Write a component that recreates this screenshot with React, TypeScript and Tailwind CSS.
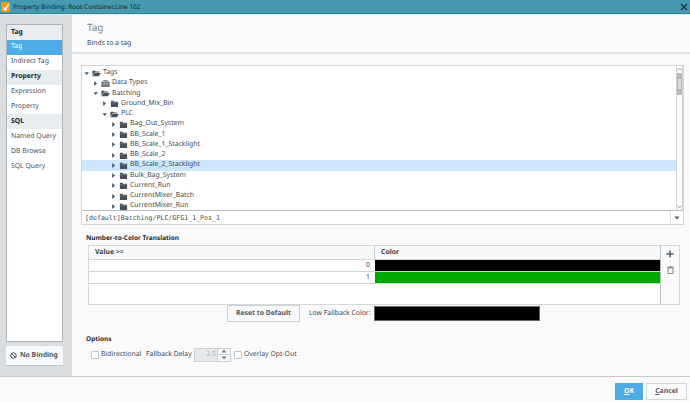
import React from "react";

const Caret = ({ open }: { open: boolean }) =>
  open ? (
    <svg width="7" height="7" viewBox="0 0 7 7" className="shrink-0"><path d="M0.5 2.2h4.4L2.7 5z" fill="#3f5a6b" /></svg>
  ) : (
    <svg width="7" height="7" viewBox="0 0 7 7" className="shrink-0"><path d="M1.2 1v5L4 3.5z" fill="#3f5a6b" /></svg>
  );

const ClosedFolder = () => (
  <svg width="9" height="9" viewBox="0 0 10 9" className="shrink-0"><path d="M1 2.5V1.5h2.8l.8 1h4.4v5.8H1z" fill="#46505a" /><path d="M1 3.6h8" stroke="#8b949c" strokeWidth=".6" /></svg>
);
const OpenFolder = () => (
  <svg width="9" height="9" viewBox="0 0 11 9" className="shrink-0"><path d="M0.5 1h3.2l.8 1h4.3v1.2H3L.5 7.5z" fill="#46505a" /><path d="M3.2 3.8h7.5L8.5 8H.8z" fill="#46505a" /></svg>
);
const TypeFolder = () => (
  <svg width="9" height="9" viewBox="0 0 10 9" className="shrink-0"><path d="M.5 2.5h9v6h-9zM2.5.8h5v1.2h-5z" fill="#5b6670" /><path d="M.5 5h9M3.5 2.5v6M6.5 2.5v6" stroke="#d5d9dc" strokeWidth=".6" /></svg>
);

const tree: { label: string; d: number; open?: boolean; icon?: "type"; sel?: boolean }[] = [
  { label: "Tags", d: 0, open: true },
  { label: "Data Types", d: 1, icon: "type" },
  { label: "Batching", d: 1, open: true },
  { label: "Ground_Mix_Bin", d: 2 },
  { label: "PLC", d: 2, open: true },
  { label: "Bag_Out_System", d: 3 },
  { label: "BB_Scale_1", d: 3 },
  { label: "BB_Scale_1_Stacklight", d: 3 },
  { label: "BB_Scale_2", d: 3 },
  { label: "BB_Scale_2_Stacklight", d: 3, sel: true },
  { label: "Bulk_Bag_System", d: 3 },
  { label: "Current_Run", d: 3 },
  { label: "CurrentMixer_Batch", d: 3 },
  { label: "CurrentMixer_Run", d: 3 },
];

const indent = ["pl-[2px]", "pl-[11px]", "pl-[20px]", "pl-[29px]"];

const side: { t: string; h?: boolean; s?: boolean }[] = [
  { t: "Tag", h: true },
  { t: "Tag", s: true },
  { t: "Indirect Tag" },
  { t: "Property", h: true },
  { t: "Expression" },
  { t: "Property" },
  { t: "SQL", h: true },
  { t: "Named Query" },
  { t: "DB Browse" },
  { t: "SQL Query" },
];

export default function App() {
  return (
    <div className="w-[690px] h-[402px] overflow-hidden flex flex-col bg-[#fafafa] text-[6.85px] leading-none text-[#3c464e] font-['Noto_Sans',sans-serif] [text-rendering:geometricPrecision] whitespace-nowrap">
      <div className="h-[14px] shrink-0 bg-[#4699ae] border-b border-[#3b8397] flex items-center pl-[1px] pr-[1px]">
        <div className="w-[9px] h-[10px] rounded-[1px] bg-[#f39a1f] flex items-center justify-center">
          <svg width="8" height="8" viewBox="0 0 8 8"><path d="M1.5 4.5L3.3 7 6.5 1" stroke="#fff" strokeWidth="1.4" fill="none" /></svg>
        </div>
        <span className="ml-[3px] mt-[1px] text-[#0e2a33] text-[6.5px]">Property Binding: Root Container.Line 102</span>
        <svg width="8" height="8" viewBox="0 0 8 8" className="ml-auto mr-[1px]"><path d="M1 1l6 6M7 1L1 7" stroke="#16313b" strokeWidth="1.2" /></svg>
      </div>
      <div className="h-px shrink-0 bg-[#d5e9ef]" />

      <div className="h-[362px] shrink-0 flex border-b border-[#c4c8cb]">
        <div className="w-[72px] shrink-0 bg-[#d9dde0] pt-[9px] pl-[6px] pr-[9px] flex flex-col">
          <div className="h-[318px] bg-white border border-[#aeb4b9] flex flex-col">
            {side.map((r, i) => (
              <div
                key={i}
                className={
                  "h-[14.9px] flex items-center pl-[4px] pt-[1px] " +
                  (r.h ? "bg-[#e9ecee] font-bold text-[#1c252b]" : r.s ? "bg-[#4dabe6] text-white" : "text-[#47525c]")
                }
              >
                {r.t}
              </div>
            ))}
          </div>
          <div className="mt-[4px] h-[20px] bg-[#f8f9fa] border-b border-[#c2c7ca] flex items-center pl-[4px] gap-[3px] font-bold text-[#4f5962]">
            <svg width="7" height="7" viewBox="0 0 8 8"><circle cx="4" cy="4" r="3.1" fill="none" stroke="#3d4850" strokeWidth="1.1" /><path d="M2 2l4 4" stroke="#3d4850" strokeWidth="1.1" /></svg>
            <span className="pt-[2px]">No Binding</span>
          </div>
        </div>

        <div className="flex-1 flex flex-col min-w-0">
          <div className="h-[39px] shrink-0 border-b-2 border-[#dfe2e5] pl-[15px] flex flex-col bg-[#fafafa]">
            <div className="mt-[7px] text-[10px] text-[#7f8b94]">Tag</div>
            <div className="mt-[9px] text-[#3f4a53]">Binds to a tag</div>
          </div>

          <div className="mt-[11px] ml-[9px] w-[603px] h-[160px] shrink-0 border border-[#d3d6d9] bg-white flex flex-col">
            <div className="h-[145px] shrink-0 flex border-b border-[#b9bec3]">
              <div className="flex-1 pt-[2px] min-w-0">
                {tree.map((n) => (
                  <div key={n.label} className={"h-[10.25px] flex items-center " + indent[n.d] + (n.sel ? " bg-[#cbe6fd]" : "")}>
                    <Caret open={!!n.open} />
                    <span className="ml-[1px] flex shrink-0">
                      {n.icon === "type" ? <TypeFolder /> : n.open ? <OpenFolder /> : <ClosedFolder />}
                    </span>
                    <span className="ml-[2px] pt-[1px] text-[#414c55]">{n.label}</span>
                  </div>
                ))}
              </div>
              <div className="w-[7px] shrink-0 border-l border-[#cfd3d6] border-r flex flex-col items-center bg-[#fdfdfd]">
                <svg width="5" height="7" viewBox="0 0 5 7"><path d="M.5 4.5L2.5 2l2 2.5" stroke="#7d8890" fill="none" strokeWidth=".8" /></svg>
                <div className="w-full h-[22px] bg-[#b6babd] flex justify-center pt-[6px]"><div className="w-[3px] h-[10px] bg-[#d8dbdd]" /></div>
                <svg width="5" height="7" viewBox="0 0 5 7" className="mt-auto"><path d="M.5 2.5L2.5 5l2-2.5" stroke="#7d8890" fill="none" strokeWidth=".8" /></svg>
              </div>
            </div>
            <div className="flex-1 flex items-center">
              <span className="flex-1 pl-[3px] pt-[1px] font-['DejaVu_Sans_Mono',monospace] text-[6.6px] text-[#414c55]">[default]Batching/PLC/GFG1_1_Pos_1</span>
              <div className="w-[13px] h-full border-l border-[#dadde0] flex items-center justify-center">
                <svg width="6" height="4" viewBox="0 0 6 4"><path d="M.5.5h5L3 3.5z" fill="#4b5a66" /></svg>
              </div>
            </div>
          </div>

          <div className="mt-[10px] ml-[14px] text-[6.5px] font-bold text-[#222d35]">Number-to-Color Translation</div>
          <div className="mt-[3.5px] ml-[16px] w-[592px] h-[60px] shrink-0 flex border border-[#d5d8da]">
            <div className="flex-1 bg-white flex flex-col min-w-0">
              <div className="h-[14px] flex bg-[#f7f8f9] font-bold text-[#333e47] border-b border-[#d5d8da]">
                <div className="w-[286px] pl-[6px] pt-[2px] flex items-center border-r border-[#c6cacd]">Value &gt;=</div>
                <div className="flex-1 pl-[6px] pt-[2px] flex items-center">Color</div>
              </div>
              <div className="h-[12px] flex border-b border-[#cfd3d6]">
                <div className="w-[286px] flex items-center justify-end pr-[5px] pt-[2px]">0</div>
                <div className="flex-1 bg-black" />
              </div>
              <div className="h-[12px] flex border-b border-[#cfd3d6]">
                <div className="w-[286px] flex items-center justify-end pr-[5px] pt-[2px]">1</div>
                <div className="flex-1 bg-[#00a800]" />
              </div>
            </div>
            <div className="w-[19px] shrink-0 border-l border-[#bcc1c5] bg-[#fafafa] flex flex-col items-center pt-[4px] gap-[8px]">
              <svg width="8" height="8" viewBox="0 0 8 8"><path d="M4 .5v7M.5 4h7" stroke="#4a5f70" strokeWidth="1.5" /></svg>
              <svg width="7" height="8" viewBox="0 0 7 8"><path d="M1 2h5v5.5H1zM0 1.2h7M2.5.4h2" stroke="#66727b" strokeWidth=".8" fill="none" /></svg>
            </div>
          </div>

          <div className="ml-[155px] flex items-center h-[17px] shrink-0">
            <div className="w-[73px] h-[17px] border border-[#cdd1d4] bg-[#f9fafb] flex items-center justify-center pt-[2px] font-bold text-[#4f5962]">Reset to Default</div>
            <span className="ml-[9px] w-[65px] pt-[2px] text-[#3f4a53]">Low Fallback Color:</span>
            <div className="w-[166px] h-[15px] bg-black border border-[#666]" />
          </div>

          <div className="mt-[14px] ml-[14px] text-[6.5px] font-bold text-[#222d35]">Options</div>
          <div className="mt-[5px] ml-[19px] flex items-center h-[14px] shrink-0">
            <div className="w-[8px] h-[8px] border border-[#c3c7ca] rounded-[1px] bg-white" />
            <span className="ml-[2px] w-[45px] pt-[2px] text-[#47525c]">Bidirectional</span>
            <span className="w-[48px] pt-[2px] text-[#3f4a53]">Fallback Delay</span>
            <div className="w-[37px] h-[14px] border border-[#cdd1d4] bg-[#e6e9ec] flex">
              <span className="flex-1 flex items-center justify-end pr-[1px] pt-[2px] text-[#a9b1b8]">2.5</span>
              <div className="w-[13px] bg-[#f7f8f9] border-l border-[#cdd1d4] flex flex-col items-center justify-around">
                <svg width="6" height="4" viewBox="0 0 6 4"><path d="M.5 3.5h5L3 .5z" fill="#75808a" /></svg>
                <div className="w-full h-px bg-[#cdd1d4]" />
                <svg width="6" height="4" viewBox="0 0 6 4"><path d="M.5.5h5L3 3.5z" fill="#75808a" /></svg>
              </div>
            </div>
            <div className="ml-[3px] w-[8px] h-[8px] border border-[#c3c7ca] rounded-[1px] bg-white" />
            <span className="ml-[2px] pt-[2px] text-[#47525c]">Overlay Opt-Out</span>
          </div>
        </div>
      </div>

      <div className="flex-1 flex justify-end items-start pt-[6px] pr-[3px] gap-[3px]">
        <div className="w-[28px] h-[17px] pt-[2px] bg-[#4dabe6] flex items-center justify-center font-bold text-white"><span><u>O</u>K</span></div>
        <div className="w-[41px] h-[17px] pt-[2px] bg-[#fbfbfc] border border-[#d2d5d8] flex items-center justify-center font-bold text-[#4f5962]"><span><u>C</u>ancel</span></div>
      </div>
    </div>
  );
}
